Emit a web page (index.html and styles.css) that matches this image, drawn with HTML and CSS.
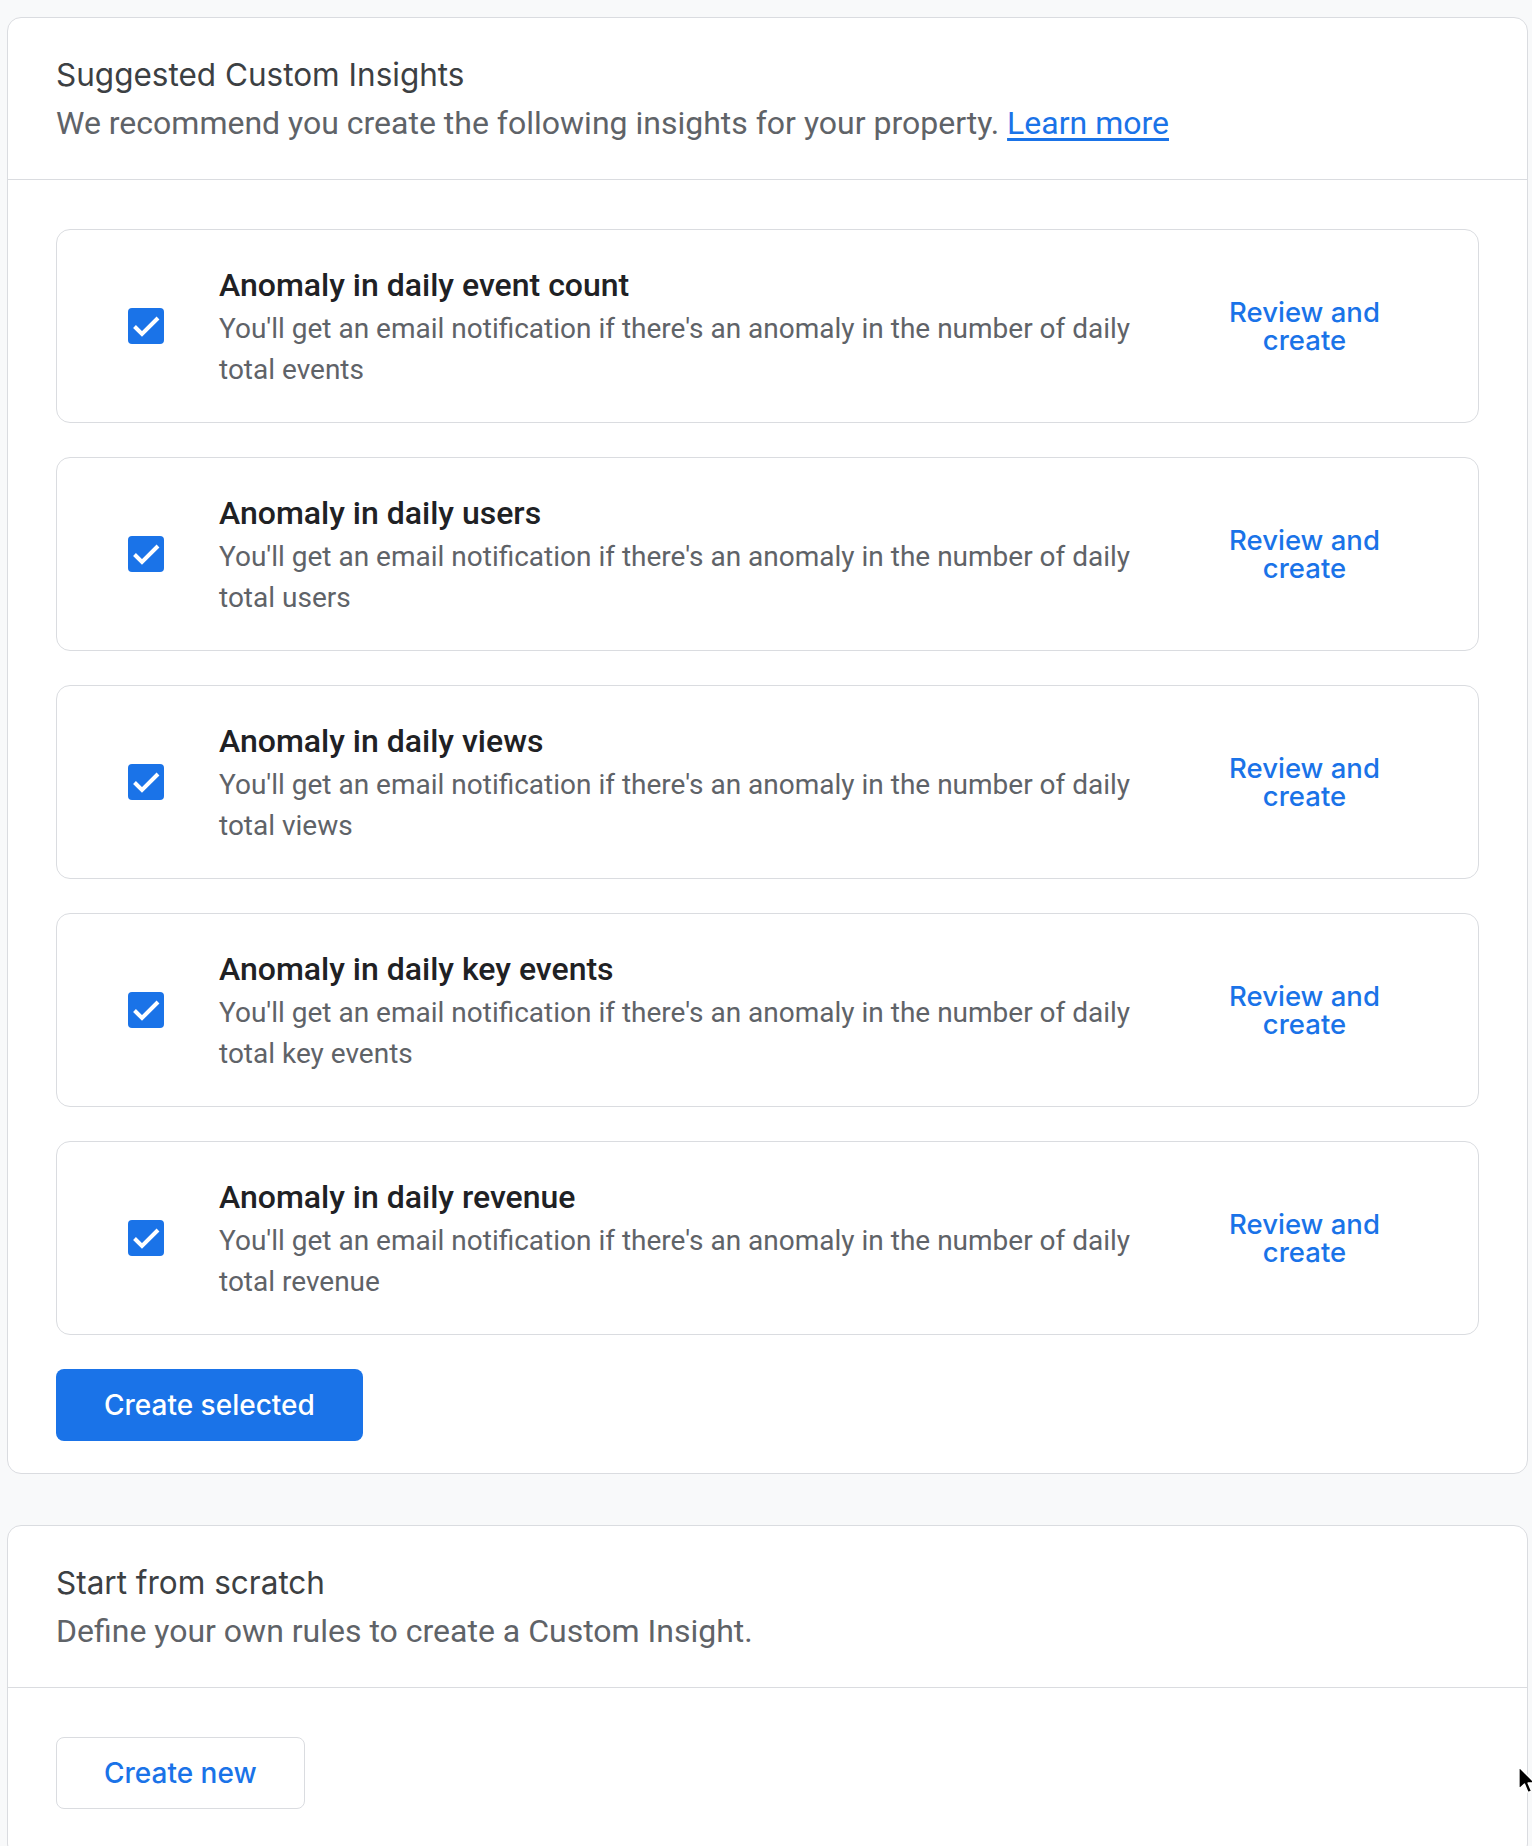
FILE: index.html
```html
<!DOCTYPE html>
<html lang="en">
<head>
<meta charset="utf-8">
<title>Custom Insights</title>
<link rel="stylesheet" href="styles.css">
</head>
<body>
<div class="page">
  <section class="panel">
    <header class="panel-head">
      <h2 class="panel-title">Suggested Custom Insights</h2>
      <p class="panel-sub">We recommend you create the following insights for your property. <a class="link" href="#">Learn more</a></p>
    </header>
    <div class="panel-body">
      <div class="list">
        <div class="item">
          <span class="checkbox"><svg viewBox="0 0 36 36" width="36" height="36"><path d="M6.5 18.5 L14 26 L30 10" fill="none" stroke="#fff" stroke-width="4"/></svg></span>
          <div class="item-text">
            <div class="item-title">Anomaly in daily event count</div>
            <div class="item-desc">You'll get an email notification if there's an anomaly in the number of daily total events</div>
          </div>
          <div class="item-action"><a class="review" href="#">Review and create</a></div>
        </div>
        <div class="item">
          <span class="checkbox"><svg viewBox="0 0 36 36" width="36" height="36"><path d="M6.5 18.5 L14 26 L30 10" fill="none" stroke="#fff" stroke-width="4"/></svg></span>
          <div class="item-text">
            <div class="item-title">Anomaly in daily users</div>
            <div class="item-desc">You'll get an email notification if there's an anomaly in the number of daily total users</div>
          </div>
          <div class="item-action"><a class="review" href="#">Review and create</a></div>
        </div>
        <div class="item">
          <span class="checkbox"><svg viewBox="0 0 36 36" width="36" height="36"><path d="M6.5 18.5 L14 26 L30 10" fill="none" stroke="#fff" stroke-width="4"/></svg></span>
          <div class="item-text">
            <div class="item-title">Anomaly in daily views</div>
            <div class="item-desc">You'll get an email notification if there's an anomaly in the number of daily total views</div>
          </div>
          <div class="item-action"><a class="review" href="#">Review and create</a></div>
        </div>
        <div class="item">
          <span class="checkbox"><svg viewBox="0 0 36 36" width="36" height="36"><path d="M6.5 18.5 L14 26 L30 10" fill="none" stroke="#fff" stroke-width="4"/></svg></span>
          <div class="item-text">
            <div class="item-title">Anomaly in daily key events</div>
            <div class="item-desc">You'll get an email notification if there's an anomaly in the number of daily total key events</div>
          </div>
          <div class="item-action"><a class="review" href="#">Review and create</a></div>
        </div>
        <div class="item">
          <span class="checkbox"><svg viewBox="0 0 36 36" width="36" height="36"><path d="M6.5 18.5 L14 26 L30 10" fill="none" stroke="#fff" stroke-width="4"/></svg></span>
          <div class="item-text">
            <div class="item-title">Anomaly in daily revenue</div>
            <div class="item-desc">You'll get an email notification if there's an anomaly in the number of daily total revenue</div>
          </div>
          <div class="item-action"><a class="review" href="#">Review and create</a></div>
        </div>
      </div>
      <button class="btn btn-primary" type="button">Create selected</button>
    </div>
  </section>

  <section class="panel panel-next">
    <header class="panel-head">
      <h2 class="panel-title">Start from scratch</h2>
      <p class="panel-sub">Define your own rules to create a Custom Insight.</p>
    </header>
    <div class="panel-body panel-body-last">
      <button class="btn btn-outline" type="button">Create new</button>
    </div>
  </section>
</div>
<svg class="cursor" viewBox="0 0 16 28" width="16" height="28"><path d="M1 1 L1 23 L6.5 18 L10 26.5 L13.5 25 L10 17 L17 17 Z" fill="#000" stroke="#fff" stroke-width="1.3" stroke-linejoin="round"/></svg>
</body>
</html>
```

FILE: styles.css
```css
html, body {
  margin: 0;
  padding: 0;
}
body {
  background: #f8f9fa;
  font-family: Roboto, "Liberation Sans", Arial, sans-serif;
  overflow-x: hidden;
  position: relative;
}
.page {
  padding: 17px 4px 0 7px;
}
.panel {
  background: #fff;
  border: 1px solid #dadce0;
  border-radius: 14px;
}
.panel-next {
  margin-top: 51px;
}
.panel-head {
  padding: 33px 48px 32px;
  border-bottom: 1px solid #dadce0;
}
.panel-title {
  margin: 0;
  font-family: Inter, "Open Sans", sans-serif;
  font-weight: 400;
  font-size: 31.5px;
  line-height: 48px;
  color: #3c4043;
}
.panel-sub {
  margin: 0;
  font-family: Roboto, sans-serif;
  font-weight: 400;
  font-size: 32px;
  line-height: 48px;
  color: #5f6368;
}
.link {
  color: #1a73e8;
  text-decoration: underline;
  text-underline-offset: 4px;
}
.panel-body {
  padding: 49px 48px 32px;
}
.panel-body-last {
  padding-bottom: 48px;
}
.list {
  display: flex;
  flex-direction: column;
  gap: 34px;
}
.item {
  display: flex;
  align-items: center;
  border: 1px solid #dadce0;
  border-radius: 14px;
  padding: 32px 48px 32px 71px;
}
.checkbox {
  flex: none;
  width: 36px;
  height: 36px;
  background: #1a73e8;
  border-radius: 4px;
  margin-right: 55px;
  display: flex;
}
.item-text {
  flex: 1;
  min-width: 0;
}
.item-title {
  font-family: Roboto, sans-serif;
  font-weight: 500;
  font-size: 32px;
  line-height: 46px;
  color: #202124;
}
.item-desc {
  font-family: Roboto, sans-serif;
  font-size: 28px;
  line-height: 41px;
  color: #5f6368;
}
.item-action {
  flex: none;
  width: 251px;
  display: flex;
  justify-content: center;
}
.review {
  display: block;
  width: 190px;
  text-align: center;
  color: #1a73e8;
  text-decoration: none;
  font-family: Inter, "Open Sans", sans-serif;
  font-weight: 500;
  font-size: 27.5px;
  line-height: 28px;
}
.btn {
  display: block;
  height: 72px;
  border-radius: 8px;
  font-family: Inter, "Open Sans", sans-serif;
  font-weight: 500;
  font-size: 28px;
  cursor: pointer;
}
.btn-primary {
  margin-top: 34px;
  padding: 0 48px;
  background: #1a73e8;
  color: #fff;
  border: none;
}
.btn-outline {
  padding: 0 47px;
  background: #fff;
  color: #1a73e8;
  border: 1px solid #dadce0;
}
.cursor {
  position: absolute;
  left: 1518px;
  top: 1766px;
}
```
